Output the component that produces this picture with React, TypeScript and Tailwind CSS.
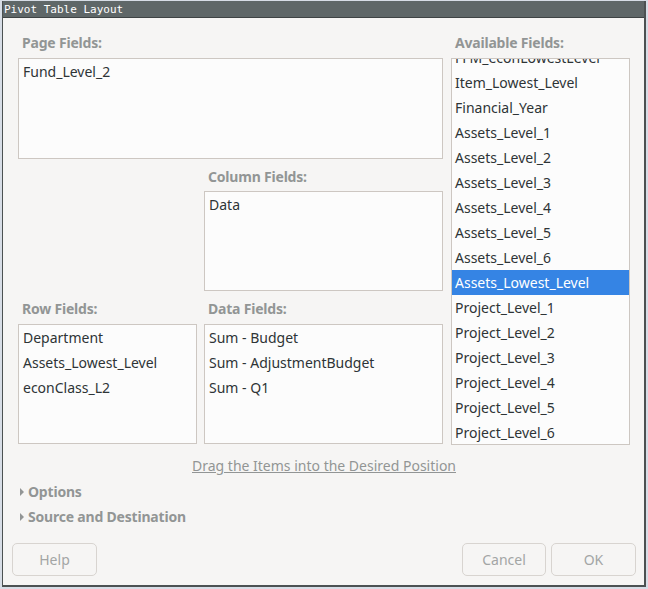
const available = [
  "FFM_econLowestLevel",
  "Item_Lowest_Level",
  "Financial_Year",
  "Assets_Level_1",
  "Assets_Level_2",
  "Assets_Level_3",
  "Assets_Level_4",
  "Assets_Level_5",
  "Assets_Level_6",
  "Assets_Lowest_Level",
  "Project_Level_1",
  "Project_Level_2",
  "Project_Level_3",
  "Project_Level_4",
  "Project_Level_5",
  "Project_Level_6",
];

function FieldBox({ items, className }: { items: string[]; className: string }) {
  return (
    <div className={`border border-[#cdc7c2] bg-[#fcfcfc] overflow-hidden ${className}`}>
      {items.map((it) => (
        <div key={it} className="h-[25px] leading-[25px] pl-[4px] text-[#2e3436] whitespace-nowrap">
          {it}
        </div>
      ))}
    </div>
  );
}

function Label({ children, className = "" }: { children: string; className?: string }) {
  return (
    <div className={`h-[17px] leading-[17px] pl-[4px] font-bold text-[#929595] tracking-[-0.2px] ${className}`}>
      {children}
    </div>
  );
}

function Expander({ children }: { children: string }) {
  return (
    <div className="flex items-center h-[17px] font-bold text-[#929595] tracking-[-0.2px]">
      <svg width="6" height="10" viewBox="0 0 6 10" className="ml-[1px] mr-[3px]">
        <path d="M1 1 L5 5 L1 9 Z" fill="#929595" />
      </svg>
      {children}
    </div>
  );
}

export default function App() {
  return (
    <div className="w-[648px] h-[589px] bg-[#d7dde6] pt-[1px] pl-[2px] overflow-hidden">
      <div
        className="w-[644px] h-[586px] flex flex-col border-l border-r-2 border-b-2 border-[#4c5152] text-[14px]"
        style={{ fontFamily: '"Noto Sans", "Open Sans", sans-serif' }}
      >
        {/* title bar */}
        <div
          className="h-[17px] leading-[17px] bg-[#5f6768] border-b border-[#3e4344] text-white text-[11px] pl-[1px]"
          style={{ fontFamily: '"DejaVu Sans Mono", monospace' }}
        >
          Pivot Table Layout
        </div>

        {/* body */}
        <div className="flex-1 bg-[#f6f5f4] flex flex-col pl-[9px] pr-[8px]">
          <div className="flex gap-[8px] pl-[6px] pt-[16px]">
            {/* left area */}
            <div className="w-[425px] flex flex-col">
              <Label className="mb-[7px]">Page Fields:</Label>
              <FieldBox items={["Fund_Level_2"]} className="h-[101px]" />

              <div className="grid grid-cols-[179px_239px] gap-x-[7px]">
                <div />
                <div className="flex flex-col">
                  <Label className="mt-[9px] mb-[6px]">Column Fields:</Label>
                  <FieldBox items={["Data"]} className="h-[100px]" />
                </div>
                <div className="flex flex-col">
                  <Label className="mt-[9px] mb-[7px]">Row Fields:</Label>
                  <FieldBox
                    items={["Department", "Assets_Lowest_Level", "econClass_L2"]}
                    className="h-[120px]"
                  />
                </div>
                <div className="flex flex-col">
                  <Label className="mt-[9px] mb-[7px]">Data Fields:</Label>
                  <FieldBox
                    items={["Sum - Budget", "Sum - AdjustmentBudget", "Sum - Q1"]}
                    className="h-[120px]"
                  />
                </div>
              </div>
            </div>

            {/* available fields */}
            <div className="w-[179px] flex flex-col">
              <Label className="mb-[7px]">Available Fields:</Label>
              <div className="h-[387px] border border-[#cdc7c2] bg-[#fcfcfc] overflow-hidden">
                <div className="-mt-[14px]">
                  {available.map((it) => (
                    <div
                      key={it}
                      className={
                        it === "Assets_Lowest_Level"
                          ? "h-[25px] leading-[25px] pl-[3px] bg-[#3584e4] text-white whitespace-nowrap"
                          : "h-[25px] leading-[25px] pl-[3px] text-[#2e3436] whitespace-nowrap"
                      }
                    >
                      {it}
                    </div>
                  ))}
                </div>
              </div>
            </div>
          </div>

          <div className="mt-[12px] h-[17px] leading-[17px] text-center text-[#929595] underline">
            Drag the Items into the Desired Position
          </div>

          <div className="mt-[9px] pl-[6px] flex flex-col gap-[8px]">
            <Expander>Options</Expander>
            <Expander>Source and Destination</Expander>
          </div>

          <div className="mt-[18px] flex items-center">
            <button className="w-[85px] h-[33px] rounded-[5px] border border-[#d8d4d0] bg-[#f6f5f4] text-[#a3a5a5]">
              Help
            </button>
            <div className="flex-1" />
            <div className="flex gap-[5px]">
              <button className="w-[84px] h-[33px] rounded-[5px] border border-[#d8d4d0] bg-[#f6f5f4] text-[#a3a5a5]">
                Cancel
              </button>
              <button className="w-[85px] h-[33px] rounded-[5px] border border-[#d8d4d0] bg-[#f6f5f4] text-[#a3a5a5]">
                OK
              </button>
            </div>
          </div>
        </div>
      </div>
    </div>
  );
}
